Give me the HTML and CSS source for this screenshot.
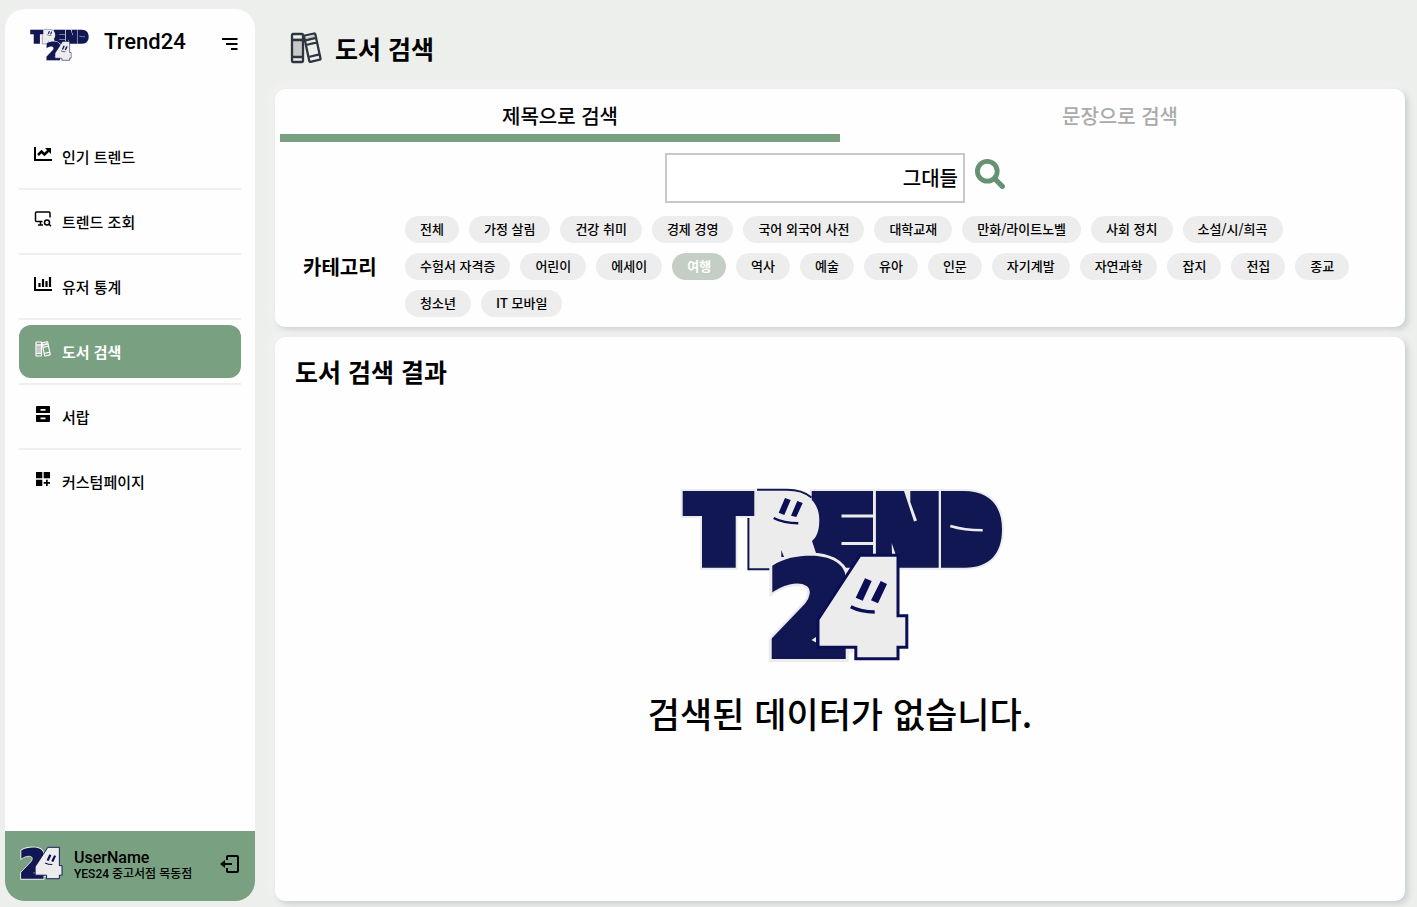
FILE: index.html
```html
<!DOCTYPE html>
<html lang="ko">
<head>
<meta charset="utf-8">
<meta name="viewport" content="width=device-width, initial-scale=1">
<title>Trend24 - 도서 검색</title>
<link rel="stylesheet" href="styles.css">
</head>
<body>
<svg class="sprite" aria-hidden="true">
  <symbol id="mark-24" viewBox="768 551 142 112">
    <path d="M772.3 565.7C784 558 797 555.7 811 555.7C828 555.7 842 562 846 575L850 650H845.7V659H771.7V636.7L804 603C809 597 810 590 806 587C798 582 783 586 772.3 594Z" fill="#ececec" stroke="#ececec" stroke-width="6"/>
    <path d="M772.3 565.7C784 558 797 555.7 811 555.7C828 555.7 842 562 845 573L850 640V648H845.7V659H771.7V636.7L804 603C809 597 810 590 806 587C798 582 783 586 772.3 594Z" fill="#111752"/>
    <path d="M769 596.500C783 586 798 582 806 587C810 590 809 597 804 603L769 639.500Z" fill="var(--logo-gap, #fefefe)"/>
    <path d="M770 595.500C783 585.500 798 582 806 587C810 590 809 597 804 603L770.500 638" fill="none" stroke="#ececec" stroke-width="2.5"/>
    <path d="M811.500 640L816 637V642.500Z" fill="#ececec"/>
    <path d="M860 555.200H898V615.800H906.800V647.200H898V658.800H855.800V647.200H818V619.500Z" fill="#ececec" stroke="#0a0f55" stroke-width="3"/>
    <path d="M865 578.300L871.700 581L862.700 600.700L855.700 597.700ZM880.700 581L887 584L878 603.300L871 600.300Z" fill="#0a0f55"/>
    <path d="M850.800 606.800C858 610.500 866 612 874.700 612" fill="none" stroke="#0a0f55" stroke-width="3.500"/>
  </symbol>
  <symbol id="logo" viewBox="676 487 328 176">
    <g fill="#111752" stroke="#ececec" stroke-width="4" paint-order="stroke">
      <path d="M811.700 491H873V567.700H790L812 541Z"/>
      <path d="M875.700 491H938.700V567.700H875.700Z"/>
      <path d="M941 491H963C990 491 1002 506 1002 529.500S990 567.700 965 567.700H941Z"/>
    </g>
    <path d="M748.700 569V490.500H786C808 490.500 819.300 503 819.300 520C819.300 530 817 537 812 541L817 556V569Z" fill="#ececec"/>
    <path d="M757 489.800H787C798 489.800 806 493 811.500 497.500M748.400 518V569.300H771" fill="none" stroke="#111752" stroke-width="2"/>
    <path d="M682.700 491H754.300V516H735.700V567.700H702V516H682.700Z" fill="#111752" stroke="#ececec" stroke-width="4" paint-order="stroke"/>
    <path d="M781.300 550V557H784Z" fill="#111752"/>
    <path d="M841.500 514.500H873.500V517.500H841.500ZM841.500 542H873.500V545H841.500ZM903.700 490H910.300V502L917 520.500L914 521.500ZM891.700 543L895.500 554H892ZM873 491H875.700V553H873Z" fill="#ececec"/>
    <path d="M950.300 526C960 529 971 530.300 982.700 530.300" fill="none" stroke="#ececec" stroke-width="2.500"/>
    <path d="M785 498L790.700 500L784.300 515L778.700 512.700ZM797.300 501L802.700 503L796.300 517L791 515.700Z" fill="#0a0f55"/>
    <path d="M773.700 518C781 522 789 523.300 798.300 523.300" fill="none" stroke="#0a0f55" stroke-width="2.500"/>
    <use href="#mark-24" x="768" y="551" width="142" height="112"/>
  </symbol>
  <symbol id="books" viewBox="0 0 32 32">
    <path d="M3 6H12V25H3Z" fill="#c8c8c8"/><path d="M15 6L24 3L25 7L16 10Z" fill="#c8c8c8"/>
    <g fill="none" stroke="currentColor" stroke-width="2.300" stroke-linejoin="round">
      <rect x="2" y="2" width="11" height="28" rx="1"/><path d="M2 8H13M2 25H13M15 3.500L24 1.500Q25 1.300 25.300 2.300L30.500 26.500Q30.700 27.500 29.700 27.700L20.500 29.900Q19.500 30.100 19.300 29.100L14.200 5Q14 3.700 15 3.500ZM15 8.500L26 5.800M16 13L27 10.300M18.500 25L29.500 22.300"/>
    </g>
  </symbol>
</svg>

<div class="app">
  <aside class="sidebar">
    <header class="brand">
      <svg class="brand-logo" role="img" aria-label="Trend24"><use href="#logo"/></svg>
      <span class="brand-name">Trend24</span>
      <button class="icon-button" type="button" aria-label="메뉴">
        <svg class="icon-menu" viewBox="0 0 16 14"><path d="M0 2H15.500M4 7H15.500M9 12H15.500" stroke="currentColor" stroke-width="2"/></svg>
      </button>
    </header>
    <nav>
      <ul class="menu">
        <li><a href="#trend">
          <svg class="menu-icon" viewBox="0 0 20 16"><path d="M2 1V14H19" fill="none" stroke="currentColor" stroke-width="2"/><path d="M5 9L8.500 5.500L11.500 8.500L16 4" fill="none" stroke="currentColor" stroke-width="2.500"/><path d="M12 2H18V8Z" fill="currentColor"/></svg>
          <span>인기 트렌드</span></a></li>
        <li><a href="#lookup">
          <svg class="menu-icon" viewBox="0 0 20 16"><path d="M9.500 10.500H3.500Q2.500 10.500 2.500 9.500V2Q2.500 1 3.500 1H16Q17 1 17 2V6.500M7.500 11V14M5 14H10" fill="none" stroke="currentColor" stroke-width="1.500"/><circle cx="14" cy="11.500" r="2.500" fill="none" stroke="currentColor" stroke-width="1.500"/><path d="M15.800 13L18 15.300" stroke="currentColor" stroke-width="1.500"/></svg>
          <span>트렌드 조회</span></a></li>
        <li><a href="#stats">
          <svg class="menu-icon" viewBox="0 0 20 16"><path d="M2 1V14H19" fill="none" stroke="currentColor" stroke-width="2"/><path d="M6.500 7V11M10 3V11M13.500 5V11M17 1V11" stroke="currentColor" stroke-width="2.200"/></svg>
          <span>유저 통계</span></a></li>
        <li><a class="active" href="#books-page" aria-current="page">
          <svg class="menu-icon"><use href="#books"/></svg>
          <span>도서 검색</span></a></li>
        <li><a href="#drawer">
          <svg class="menu-icon" viewBox="0 0 20 16"><path fill="currentColor" fill-rule="evenodd" d="M4 0H16Q17 0 17 1V7H3V1Q3 0 4 0ZM7.500 3V4.800H12.500V3ZM3 9H17V15Q17 16 16 16H4Q3 16 3 15ZM7.500 11.500V13.300H12.500V11.500Z"/></svg>
          <span>서랍</span></a></li>
        <li><a href="#custom">
          <svg class="menu-icon" viewBox="0 0 20 16"><path fill="currentColor" d="M3 1H9.300V7.300H3ZM10.700 1H17V7.300H10.700ZM3 8.700H9.300V15H3ZM13 8.700H14.700V11H17V12.700H14.700V15H13V12.700H10.700V11H13Z"/></svg>
          <span>커스텀페이지</span></a></li>
      </ul>
    </nav>
    <footer class="user">
      <svg class="user-logo" aria-hidden="true"><use href="#mark-24"/></svg>
      <div class="user-text">
        <span class="user-name">UserName</span>
        <span class="user-store">YES24 중고서점 목동점</span>
      </div>
      <button class="icon-button" type="button" aria-label="로그아웃">
        <svg class="icon-logout" viewBox="0 0 20 18"><path d="M7 5V2Q7 1 8 1H17Q18 1 18 2V16Q18 17 17 17H8Q7 17 7 16V13M3 9H12" fill="none" stroke="currentColor" stroke-width="2"/><path d="M0 9L5 5V13Z" fill="currentColor"/></svg>
      </button>
    </footer>
  </aside>

  <main class="content">
    <h1 class="page-title"><svg class="title-icon" aria-hidden="true"><use href="#books"/></svg>도서 검색</h1>

    <section class="card search">
      <div class="tabs" role="tablist">
        <button class="tab selected" type="button" role="tab" aria-selected="true">제목으로 검색</button>
        <button class="tab" type="button" role="tab" aria-selected="false">문장으로 검색</button>
      </div>
      <form class="search-form">
        <input class="search-input" type="text" value="그대들" aria-label="검색어">
        <button class="icon-button search-button" type="button" aria-label="검색">
          <svg class="icon-search" viewBox="0 0 30 30"><circle cx="12.300" cy="12.300" r="9.900" fill="none" stroke="currentColor" stroke-width="4.800"/><path d="M20 20L27.300 27.300" stroke="currentColor" stroke-width="5.200" stroke-linecap="round"/></svg>
        </button>
      </form>
      <div class="category">
        <h2 class="category-title">카테고리</h2>
        <div class="chips">
          <button class="chip" type="button">전체</button>
          <button class="chip" type="button">가정 살림</button>
          <button class="chip" type="button">건강 취미</button>
          <button class="chip" type="button">경제 경영</button>
          <button class="chip" type="button">국어 외국어 사전</button>
          <button class="chip" type="button">대학교재</button>
          <button class="chip" type="button">만화/라이트노벨</button>
          <button class="chip" type="button">사회 정치</button>
          <button class="chip" type="button">소설/시/희곡</button>
          <button class="chip" type="button">수험서 자격증</button>
          <button class="chip" type="button">어린이</button>
          <button class="chip" type="button">에세이</button>
          <button class="chip chosen" type="button" aria-pressed="true">여행</button>
          <button class="chip" type="button">역사</button>
          <button class="chip" type="button">예술</button>
          <button class="chip" type="button">유아</button>
          <button class="chip" type="button">인문</button>
          <button class="chip" type="button">자기계발</button>
          <button class="chip" type="button">자연과학</button>
          <button class="chip" type="button">잡지</button>
          <button class="chip" type="button">전집</button>
          <button class="chip" type="button">종교</button>
          <button class="chip" type="button">청소년</button>
          <button class="chip" type="button">IT 모바일</button>
        </div>
      </div>
    </section>

    <section class="card results">
      <h2 class="results-title">도서 검색 결과</h2>
      <div class="empty">
        <svg class="empty-logo" aria-hidden="true"><use href="#logo"/></svg>
        <p class="empty-text">검색된 데이터가 없습니다.</p>
      </div>
    </section>
  </main>
</div>
</body>
</html>
```
FILE: styles.css
```css
* {
  box-sizing: border-box;
}

body {
  margin: 0;
  background: #edefec;
  color: #000;
  font-family: "Noto Sans CJK KR", sans-serif;
  font-weight: 500;
}

h1, h2, p, ul {
  margin: 0;
  padding: 0;
}

button, input {
  font: inherit;
  color: inherit;
}

button {
  border: 0;
  padding: 0;
  background: none;
  cursor: pointer;
}

svg {
  display: block;
  flex: none;
}

.sprite {
  position: absolute;
  width: 0;
  height: 0;
}

.app {
  display: flex;
  gap: 20px;
  min-height: 100vh;
  padding: 9px 12px 6px 5px;
}

.sidebar {
  display: flex;
  flex: none;
  flex-direction: column;
  width: 250px;
  overflow: hidden;
  border-radius: 20px;
  background: #fefefe;
}

.brand {
  display: flex;
  align-items: center;
  height: 66px;
  margin-bottom: 50px;
  padding: 0 17px 0 24px;
}

.brand-logo {
  width: 60px;
  height: 34px;
  margin-top: 6px;
}

.brand-name {
  margin-left: 15px;
  font-family: Roboto, "Noto Sans CJK KR", sans-serif;
  font-size: 22px;
  line-height: 32px;
}

.icon-button {
  flex: none;
  margin-left: auto;
}

.icon-menu {
  width: 16px;
  height: 14px;
  margin-top: 4px;
}

.menu {
  padding: 0 14px;
  list-style: none;
}

.menu li {
  padding: 5px 0;
  border-bottom: 2px solid #efefef;
}

.menu li:last-child {
  border-bottom: 0;
}

.menu a {
  display: flex;
  align-items: center;
  gap: 9px;
  height: 53px;
  padding: 0 14px;
  border-radius: 12px;
  color: inherit;
  font-size: 15px;
  text-decoration: none;
}

.menu a.active {
  background: #78a081;
  color: #fff;
  font-weight: 700;
}

.menu-icon {
  width: 20px;
  height: 16px;
  margin-bottom: 5px;
}

.user {
  display: flex;
  align-items: center;
  height: 70px;
  margin-top: auto;
  padding: 0 15px;
  background: #78a081;
}

.user-logo {
  --logo-gap: #78a081;
  width: 43px;
  height: 34px;
  margin-bottom: 6px;
}

.user-text {
  display: flex;
  flex-direction: column;
  margin-left: 11px;
  font-family: Roboto, "Noto Sans CJK KR", sans-serif;
}

.user-name {
  font-size: 16px;
  line-height: 16px;
}

.user-store {
  font-size: 12px;
  line-height: 16px;
  white-space: nowrap;
}

.icon-logout {
  width: 20px;
  height: 18px;
  margin-bottom: 5px;
}

.content {
  display: flex;
  flex: 1;
  flex-direction: column;
  min-width: 0;
}

.page-title {
  display: flex;
  align-items: center;
  gap: 13px;
  height: 80px;
  padding-bottom: 2px;
  padding-left: 15px;
  font-size: 25px;
}

.title-icon {
  width: 32px;
  height: 32px;
  color: #2e3440;
}

.card {
  border-radius: 10px;
  background: #fefefe;
  box-shadow: 3px 3px 6px #c8cdd0, -3px -3px 12px #f3f5f2;
}

.search {
  padding: 0 5px 10px;
}

.tabs {
  display: grid;
  grid-template-columns: 1fr 1fr;
}

.tab {
  height: 53px;
  border-bottom: 8px solid transparent;
  padding-top: 8px;
  color: #a9aba9;
  font-size: 20px;
  line-height: 30px;
}

.tab.selected {
  border-color: #78a081;
  color: #000;
}

.search-form {
  display: flex;
  justify-content: center;
  gap: 10px;
  margin: 11px 10px 13px 0;
}

.search-input {
  width: 300px;
  height: 50px;
  border: 2px solid #c8c8c8;
  padding: 0 5px 2px;
  background: #fff;
  font-size: 20px;
  text-align: right;
}

.search-button {
  align-self: flex-start;
  margin-top: 6px;
  margin-left: 0;
}

.icon-search {
  width: 30px;
  height: 30px;
  color: #659272;
}

.category {
  display: flex;
  align-items: center;
  padding-right: 15px;
}

.category-title {
  flex: none;
  width: 125px;
  padding-left: 23px;
  font-size: 20px;
}

.chips {
  display: flex;
  flex-wrap: wrap;
  gap: 10px;
}

.chip {
  height: 27px;
  border-radius: 14px;
  padding: 0 15px 2px;
  background: #ededed;
  font-size: 13px;
  line-height: 25px;
}

.chip.chosen {
  background: #c4cec4;
  color: #fff;
  font-weight: 700;
}

.results {
  flex: 1;
  margin-top: 10px;
  padding: 14px 20px;
}

.results-title {
  font-size: 25px;
  line-height: 40px;
}

.empty {
  display: flex;
  flex-direction: column;
  align-items: center;
  gap: 25px;
  padding-top: 96px;
}

.empty-logo {
  width: 328px;
  height: 176px;
}

.empty-text {
  font-size: 35px;
  line-height: 50px;
}
```
